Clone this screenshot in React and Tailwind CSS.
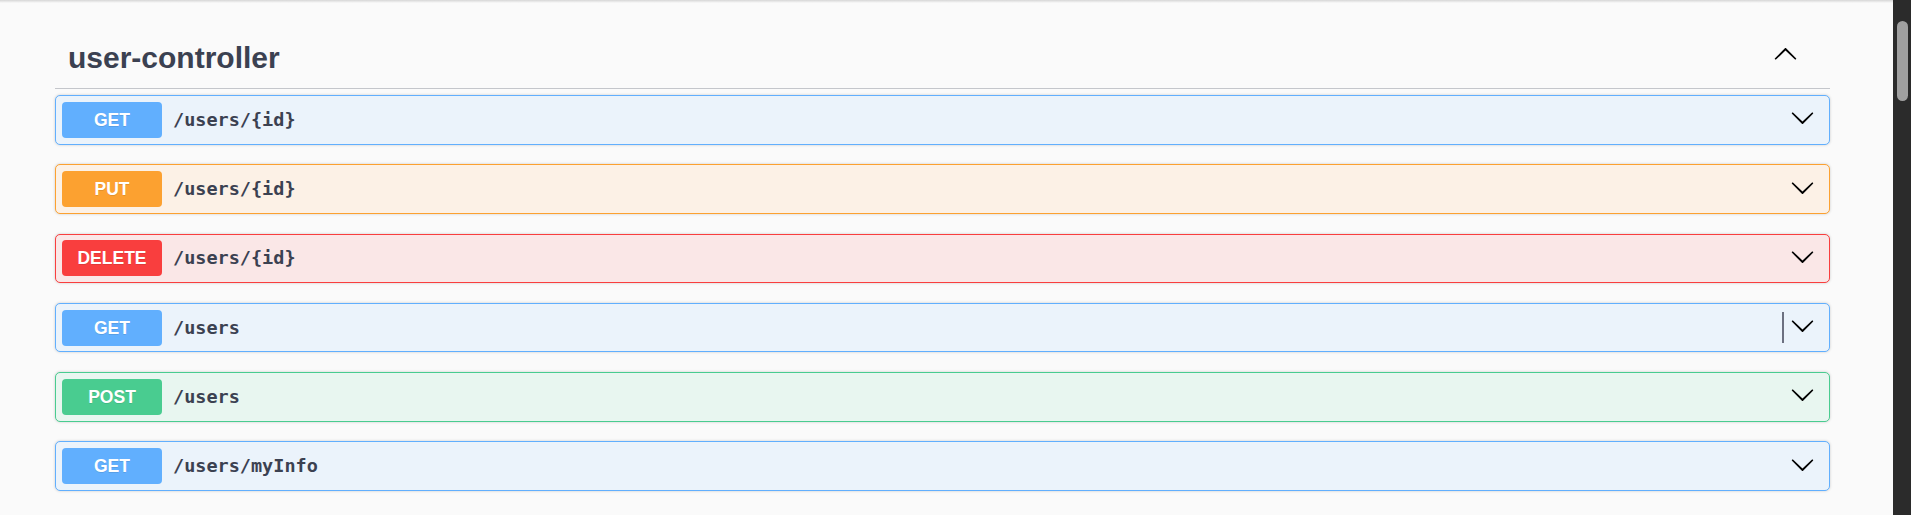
import React from "react";

const ARROW =
  "M17.418 6.109c.272-.268.709-.268.979 0s.271.701 0 .969l-7.908 7.83c-.27.268-.707.268-.979 0l-7.908-7.83c-.27-.268-.27-.701 0-.969.271-.268.709-.268.979 0L10 13.25l7.418-7.141z";

const methods = {
  GET: { box: "border-[#61affe] bg-[#ebf3fb]", badge: "bg-[#61affe]" },
  PUT: { box: "border-[#fca130] bg-[#fcf1e6]", badge: "bg-[#fca130]" },
  DELETE: { box: "border-[#f93e3e] bg-[#fae7e7]", badge: "bg-[#f93e3e]" },
  POST: { box: "border-[#49cc90] bg-[#e8f6f0]", badge: "bg-[#49cc90]" },
};

const endpoints = [
  { method: "GET", path: "/users/{id}" },
  { method: "PUT", path: "/users/{id}" },
  { method: "DELETE", path: "/users/{id}" },
  { method: "GET", path: "/users", caret: true },
  { method: "POST", path: "/users" },
  { method: "GET", path: "/users/myInfo" },
];

const Arrow = ({ up, className }) => (
  <svg
    width="25"
    height="25"
    viewBox="0 0 20 20"
    className={className}
    style={up ? { transform: "rotate(180deg)" } : undefined}
  >
    <path d={ARROW} fill="#000" />
  </svg>
);

const Operation = ({ method, path, caret }) => {
  const m = methods[method];
  return (
    <div
      className={`flex items-center h-[49.5px] rounded-[5px] border pl-[6px] pr-[14px] shadow-[0_0_3px_rgba(0,0,0,0.19)] ${m.box}`}
    >
      <span
        className={`flex items-center justify-center w-[100px] h-[36px] rounded-[4px] text-white font-bold text-[17.5px] [text-shadow:0_1px_0_rgba(0,0,0,0.1)] ${m.badge}`}
        style={{ fontFamily: '"Liberation Sans", Arial, sans-serif' }}
      >
        {method}
      </span>
      <span
        className="ml-[11px] text-[18.5px] font-semibold text-[#3b4151]"
        style={{ fontFamily: '"DejaVu Sans Mono", monospace' }}
      >
        {path}
      </span>
      <div className="ml-auto flex items-center">
        {/* mouse caret left over in the screenshot */}
        {caret && <span className="w-[2px] h-[31px] bg-[#6c7080] mr-[6px]" />}
        <Arrow className="mb-[4px]" />
      </div>
    </div>
  );
};

export default function App() {
  return (
    <div className="flex h-[515px] w-full overflow-hidden bg-[#fafafa]">
      <div className="flex-1 min-w-0">
        <div className="h-[3px] bg-gradient-to-b from-[#d6d6d6] to-[#fafafa]" />
        <div className="ml-[55px] w-[1775px]">
          {/* tag header */}
          <div className="flex items-start h-[86px] border-b border-[#c4c6cb] pt-[38px] pl-[13px]">
            <h3
              className="text-[30px] leading-[34px] font-bold text-[#3b4151]"
              style={{ fontFamily: '"Liberation Sans", Arial, sans-serif' }}
            >
              user-controller
            </h3>
            <button className="ml-auto mr-[32px] mt-[1px]">
              <Arrow up />
            </button>
          </div>

          <div className="mt-[6px] flex flex-col gap-[19.8px]">
            {endpoints.map((e, i) => (
              <Operation key={i} {...e} />
            ))}
          </div>
        </div>
      </div>

      {/* scrollbar */}
      <div className="w-[18px] shrink-0 bg-[#2b2b2b] pt-[21px] flex justify-center">
        <div className="w-[11px] h-[80px] rounded-full bg-[#a0a0a0]" />
      </div>
    </div>
  );
}
